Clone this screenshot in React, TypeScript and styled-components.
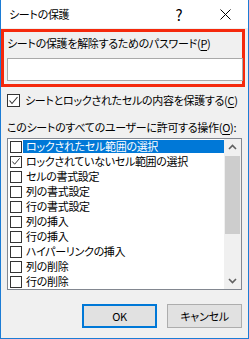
import React from 'react';
import styled, { createGlobalStyle } from 'styled-components';

const GlobalStyle = createGlobalStyle`
  html, body {
    margin: 0;
    padding: 0;
    background: #f0f0f0;
  }
  body {
    font-family: "Noto Sans CJK JP", "Noto Sans", sans-serif;
    font-size: 11px;
    letter-spacing: -0.3px;
    color: #000;
    font-feature-settings: "palt";
  }
`;

const Window = styled.div`
  width: 249px;
  height: 339px;
  box-sizing: border-box;
  border: 1px solid #1c7cd5;
  border-top: none;
  background: #f0f0f0;
  display: flex;
  flex-direction: column;
  overflow: hidden;
`;

const TitleBar = styled.div`
  height: 28px;
  background: #fff;
  display: flex;
  align-items: center;
  padding-left: 8px;
`;

const Title = styled.span`
  flex: 1;
  line-height: 16px;
`;

const TitleButton = styled.div`
  width: 46px;
  height: 28px;
  display: flex;
  align-items: center;
  justify-content: center;
  font-size: 15px;
`;

const Body = styled.div`
  display: flex;
  flex-direction: column;
  padding: 1px 6px 0 6px;
`;

const Highlight = styled.div`
  margin: 0 -3px 0 -6px;
  border: 3px solid #f5290c;
  padding: 3px 0 3px 3px;
  display: flex;
  flex-direction: column;
`;

const Label = styled.div`
  line-height: 17px;
  height: 17px;
  white-space: nowrap;
`;

const Under = styled.span`
  text-decoration: underline;
  text-underline-offset: 2px;
`;

const PasswordInput = styled.div`
  margin-top: 6px;
  margin-right: -1px;
  height: 23px;
  box-sizing: border-box;
  border: 1px solid #a9a9a9;
  background: #fff;
`;

const CheckRow = styled.label`
  margin-top: 6px;
  height: 15px;
  display: flex;
  align-items: center;
  gap: 5px;
  line-height: 15px;
  white-space: nowrap;
`;

const Box = styled.span<{ $small?: boolean }>`
  width: ${p => (p.$small ? 12 : 13)}px;
  height: ${p => (p.$small ? 12 : 13)}px;
  box-sizing: border-box;
  border: 1px solid #333;
  background: #fff;
  flex-shrink: 0;
  display: flex;
  align-items: center;
  justify-content: center;
`;

const SectionLabel = styled.div`
  margin-top: 12px;
  line-height: 15px;
  height: 15px;
  white-space: nowrap;
`;

const ListBox = styled.div`
  margin-top: 3px;
  height: 152px;
  box-sizing: border-box;
  border: 1px solid #828790;
  background: #fff;
  display: flex;
`;

const Items = styled.div`
  flex: 1;
  display: flex;
  flex-direction: column;
`;

const Item = styled.div`
  height: 15px;
  display: flex;
  align-items: center;
  padding-left: 2px;
`;

const ItemText = styled.span<{ $selected?: boolean }>`
  flex: 1;
  height: 13px;
  margin-left: 1px;
  padding-left: 3px;
  line-height: 13px;
  white-space: nowrap;
  background: ${p => (p.$selected ? '#0078d7' : 'transparent')};
  color: ${p => (p.$selected ? '#fff' : '#000')};
`;

const ScrollBar = styled.div`
  width: 17px;
  background: #f0f0f0;
  display: flex;
  flex-direction: column;
  align-items: center;
`;

const Arrow = styled.div`
  height: 16px;
  width: 17px;
  display: flex;
  align-items: center;
  justify-content: center;
`;

const Track = styled.div`
  flex: 1;
  width: 15px;
  display: flex;
  flex-direction: column;
`;

const Thumb = styled.div`
  margin-top: 1px;
  height: 78px;
  background: #cdcdcd;
`;

const Buttons = styled.div`
  margin-top: 14px;
  display: flex;
  justify-content: flex-end;
  gap: 10px;
`;

const Button = styled.button<{ $primary?: boolean }>`
  width: 75px;
  height: 24px;
  box-sizing: border-box;
  border: ${p => (p.$primary ? '2px solid #0078d7' : '1px solid #adadad')};
  background: #e1e1e1;
  font-family: inherit;
  font-size: 11px;
  letter-spacing: -0.3px;
  font-feature-settings: "palt";
  color: #000;
  padding: 0;
  line-height: 16px;
`;

const Check = () => (
  <svg width="11" height="11" viewBox="0 0 11 11">
    <polyline points="1.5,5.5 4,8.5 9.5,2" fill="none" stroke="#333" strokeWidth="1.1" />
  </svg>
);

const Chevron = ({ up }: { up?: boolean }) => (
  <svg width="9" height="6" viewBox="0 0 9 6">
    <polyline
      points={up ? '1,5 4.5,1.5 8,5' : '1,1 4.5,4.5 8,1'}
      fill="none"
      stroke="#606060"
      strokeWidth="1.6"
    />
  </svg>
);

const items: { text: string; checked?: boolean; selected?: boolean }[] = [
  { text: 'ロックされたセル範囲の選択', selected: true },
  { text: 'ロックされていないセル範囲の選択', checked: true },
  { text: 'セルの書式設定' },
  { text: '列の書式設定' },
  { text: '行の書式設定' },
  { text: '列の挿入' },
  { text: '行の挿入' },
  { text: 'ハイパーリンクの挿入' },
  { text: '列の削除' },
  { text: '行の削除' },
];

export default function App() {
  return (
    <>
      <GlobalStyle />
      <Window>
        <TitleBar>
          <Title>シートの保護</Title>
          <TitleButton>?</TitleButton>
          <TitleButton>
            <svg width="11" height="11" viewBox="0 0 11 11">
              <path d="M0.5 0.5 L10.5 10.5 M10.5 0.5 L0.5 10.5" stroke="#000" strokeWidth="1" />
            </svg>
          </TitleButton>
        </TitleBar>
        <Body>
          <Highlight>
            <Label>
              シートの保護を解除するためのパスワード(<Under>P</Under>)
            </Label>
            <PasswordInput />
          </Highlight>
          <CheckRow>
            <Box>
              <Check />
            </Box>
            <span>
              シートとロックされたセルの内容を保護する(<Under>C</Under>)
            </span>
          </CheckRow>
          <SectionLabel>
            このシートのすべてのユーザーに許可する操作(<Under>O</Under>):
          </SectionLabel>
          <ListBox>
            <Items>
              {items.map(it => (
                <Item key={it.text}>
                  <Box $small>{it.checked && <Check />}</Box>
                  <ItemText $selected={it.selected}>{it.text}</ItemText>
                </Item>
              ))}
            </Items>
            <ScrollBar>
              <Arrow>
                <Chevron up />
              </Arrow>
              <Track>
                <Thumb />
              </Track>
              <Arrow>
                <Chevron />
              </Arrow>
            </ScrollBar>
          </ListBox>
          <Buttons>
            <Button $primary>OK</Button>
            <Button>キャンセル</Button>
          </Buttons>
        </Body>
      </Window>
    </>
  );
}
